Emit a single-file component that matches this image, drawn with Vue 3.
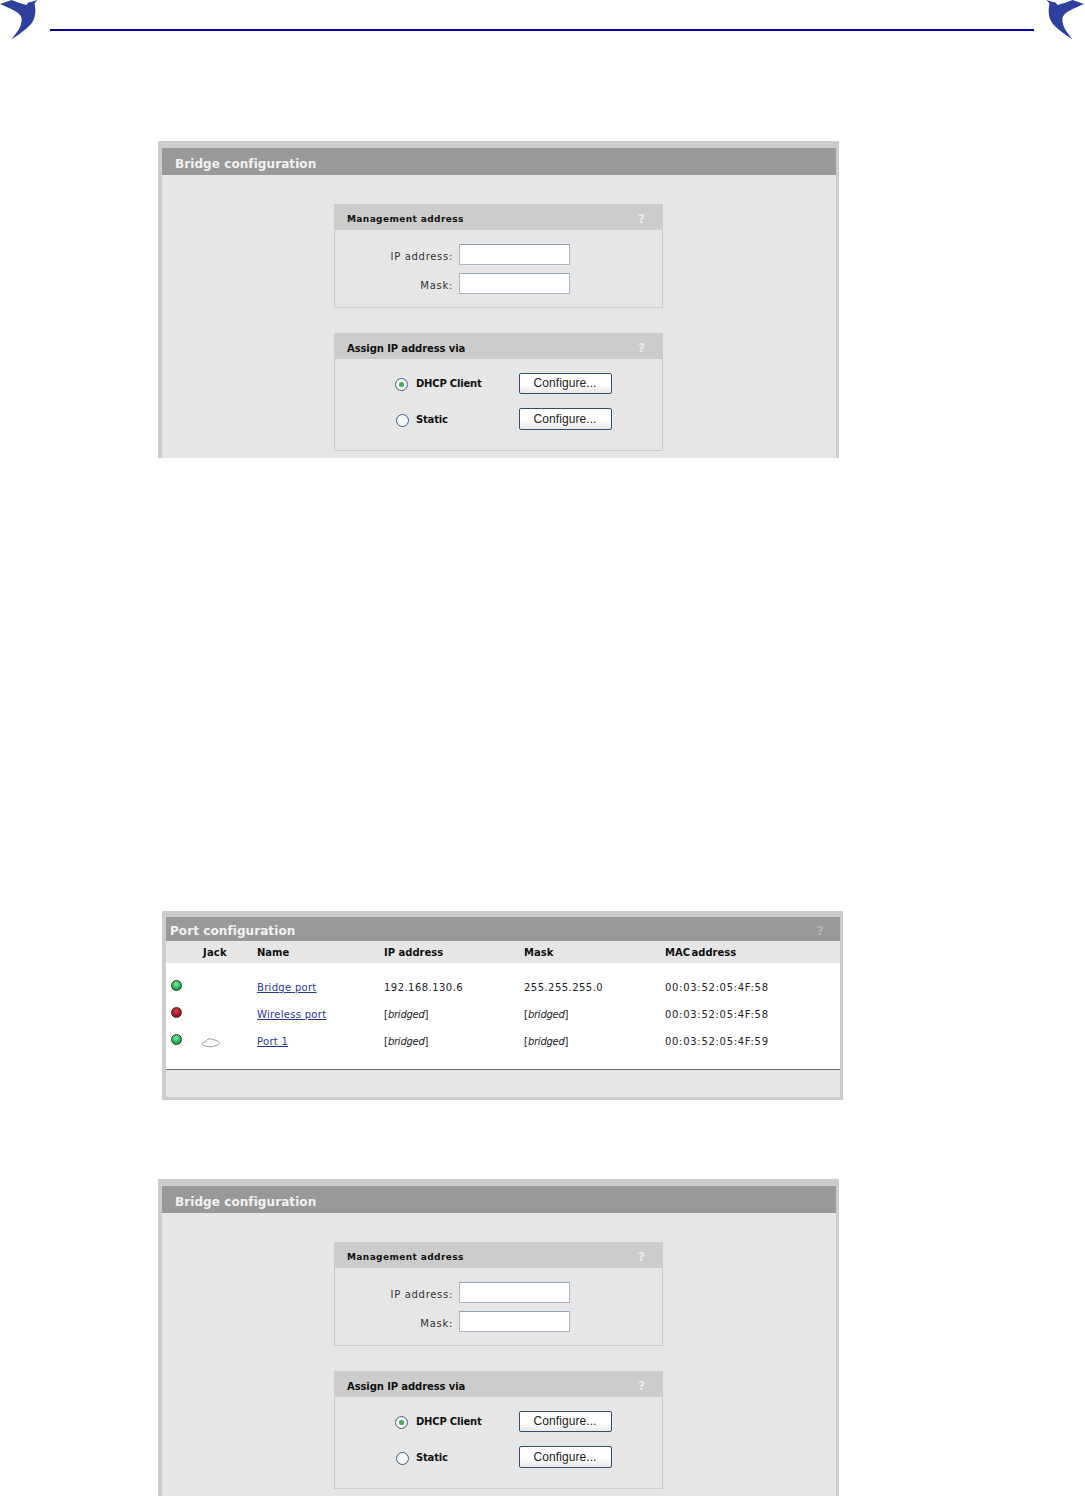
<script setup>
const birdPath = 'M0 4 L11.500 0 C17 2 22 4 26.500 5 C27.500 3 29 1.800 31 2 L37.500 0 L34.500 3.500 C35.500 8 36 13 34 19 C31 26 24 31 11.500 39.500 C16 33 20 29 21 24 C22 20 22 17 20 15 C17 11 8 7.500 0 4 Z'
const ports = [
  { name: 'Bridge port', ip: '192.168.130.6', mask: '255.255.255.0', mac: '00:03:52:05:4F:58', state: 'on', jack: false },
  { name: 'Wireless port', ip: null, mask: null, mac: '00:03:52:05:4F:58', state: 'off', jack: false },
  { name: 'Port 1', ip: null, mask: null, mac: '00:03:52:05:4F:59', state: 'on', jack: true }
]
const sections = [
  { id: 'first', cls: 'gap-top' },
  { id: 'second', cls: 'gap-last' }
]
</script>

<template>
  <div class="page">
    <header class="head">
      <svg class="bird" viewBox="0 0 38 40" width="38" height="40"><path :d="birdPath" fill="#2f3f9e" /></svg>
      <div class="rule"></div>
      <svg class="bird flip" viewBox="0 0 38 40" width="38" height="40"><path :d="birdPath" fill="#2f3f9e" /></svg>
    </header>

    <template v-for="(s, i) in sections" :key="s.id">
      <section class="panel bridge" :class="s.cls">
        <h2 class="title">Bridge configuration</h2>
        <div class="bridge-body">
          <div class="box mgmt">
            <div class="box-head">
              <span class="box-title tight">Management address</span>
              <span class="help">?</span>
            </div>
            <div class="fields">
              <label class="field"><span>IP address:</span><input type="text" class="inp" /></label>
              <label class="field"><span>Mask:</span><input type="text" class="inp" /></label>
            </div>
          </div>
          <div class="box assign">
            <div class="box-head">
              <span class="box-title wide">Assign IP address via</span>
              <span class="help">?</span>
            </div>
            <div class="options">
              <div class="option first">
                <span class="radio checked"><i></i></span>
                <span class="opt-label">DHCP Client</span>
                <button class="btn">Configure...</button>
              </div>
              <div class="option second">
                <span class="radio"></span>
                <span class="opt-label">Static</span>
                <button class="btn">Configure...</button>
              </div>
            </div>
          </div>
        </div>
      </section>

      <section v-if="i === 0" class="panel ports">
        <div class="title port-title">
          <span>Port configuration</span>
          <span class="help big">?</span>
        </div>
        <div class="grid grid-head">
          <span></span><span class="jack-head">Jack</span><span>Name</span><span>IP address</span><span>Mask</span><span class="mac-head">MAC address</span>
        </div>
        <div class="rows">
          <div v-for="p in ports" :key="p.name" class="grid row">
            <span class="light" :class="p.state"></span>
            <span class="jack">
              <svg v-if="p.jack" viewBox="0 0 20 11" width="20" height="11">
                <path d="M1 6.500 C3 5 5 4.500 6 3 C7 1.500 9 1.500 11 2.200 C13 3 16 3.500 18 5 C19.500 6.500 18.500 7.500 15 8.500 C12 9.800 8 10 6 9.500 C4 9 1.500 8 1 6.500 Z" fill="none" stroke="#999" stroke-width="1" />
              </svg>
            </span>
            <a class="link" href="#">{{ p.name }}</a>
            <span v-if="p.ip" class="num">{{ p.ip }}</span>
            <span v-else>[<em>bridged</em>]</span>
            <span v-if="p.mask" class="num">{{ p.mask }}</span>
            <span v-else>[<em>bridged</em>]</span>
            <span class="mac">{{ p.mac }}</span>
          </div>
        </div>
        <div class="port-foot"></div>
      </section>
    </template>
  </div>
</template>

<style scoped>
.page {
  width: 1085px;
  height: 1496px;
  overflow: hidden;
  background: #fff;
  font-family: "DejaVu Sans", Verdana, sans-serif;
  font-size: 10px;
  color: #111;
}
.head {
  display: flex;
  align-items: flex-start;
  gap: 12px;
  height: 41px;
  padding-right: 1px;
  box-sizing: border-box;
}
.bird { flex: none; display: block; }
.flip { transform: scaleX(-1); }
.rule {
  flex: 1;
  height: 2px;
  margin-top: 29px;
  background: #0000a0;
}
.panel {
  box-sizing: border-box;
  width: 681px;
  background: #e6e6e6;
  border: solid #ccc;
}
.bridge {
  height: 317px;
  margin-left: 158px;
  border-width: 7px 3px 0 4px;
}
.gap-top { margin-top: 100px; }
.gap-last { margin-top: 79px; }
.title {
  margin: 0;
  height: 27px;
  background: #999;
  color: #f2f2f2;
  font-size: 12px;
  letter-spacing: 0.08px;
  font-weight: bold;
  line-height: 33px;
  padding-left: 13px;
}
.bridge-body {
  padding: 29px 0 0 172px;
}
.box {
  box-sizing: border-box;
  width: 329px;
  border: 1px solid #ccc;
  border-top: 0;
}
.mgmt { height: 104px; }
.assign { height: 118px; margin-top: 25px; }
.box-head {
  display: flex;
  justify-content: space-between;
  align-items: center;
  height: 26px;
  margin: 0 -1px;
  padding: 4px 18px 0 13px;
  box-sizing: border-box;
  background: #ccc;
}
.box-title { font-weight: bold; color: #111; }
.tight { font-size: 9px; letter-spacing: 0.4px; }
.wide { font-size: 10px; letter-spacing: -0.1px; }
.help {
  color: #ededed;
  font-size: 12px;
  font-weight: bold;
}
.fields {
  display: flex;
  flex-direction: column;
  gap: 8px;
  padding-top: 14px;
  padding-right: 92px;
  align-items: flex-end;
}
.field {
  display: flex;
  align-items: center;
  gap: 6px;
  color: #333;
  letter-spacing: 0.7px;
}
.field span { padding-top: 4px; }
.inp {
  box-sizing: border-box;
  width: 111px;
  height: 21px;
  margin: 0;
  padding: 0;
  background: #fff;
  border: 1px solid #a9b6c6;
  border-top-color: #8ea3ba;
  border-radius: 0;
}
.options {
  display: flex;
  flex-direction: column;
  gap: 14px;
  padding: 14px 0 0 61px;
}
.option {
  display: flex;
  align-items: center;
}
.first { height: 21px; }
.second { height: 22px; }
.radio {
  flex: none;
  box-sizing: border-box;
  width: 13px;
  height: 13px;
  margin-top: 2px;
  border: 1px solid #3d5f80;
  border-radius: 50%;
  background: #f4f6f8;
  display: flex;
  align-items: center;
  justify-content: center;
}
.first .radio { margin-left: -1px; margin-right: 1px; }
.radio i {
  width: 5px;
  height: 5px;
  border-radius: 50%;
  background: #3fae55;
}
.opt-label {
  width: 103px;
  margin-left: 7px;
  font-weight: bold;
  font-size: 10px;
  letter-spacing: -0.2px;
  color: #111;
}
.btn {
  box-sizing: border-box;
  width: 93px;
  height: 100%;
  margin: 0;
  padding: 0 1px 2px 0;
  background: linear-gradient(#fff, #fff 55%, #e8e8e8);
  border: 1px solid #33506e;
  border-radius: 2px;
  font-family: "Liberation Sans", Arial, sans-serif;
  font-size: 12px;
  letter-spacing: 0.08px;
  color: #222;
}
.second .btn { padding-bottom: 0; }
.ports {
  height: 189px;
  margin-top: 453px;
  margin-left: 162px;
  width: 681px;
  border-width: 6px 3px 3px 4px;
}
.port-title {
  display: flex;
  justify-content: space-between;
  align-items: center;
  line-height: 24px;
  padding: 4px 16px 0 4px;
  box-sizing: border-box;
  height: 24px;
}
.big { font-size: 13px; color: #b5b5b5; }
.grid {
  display: grid;
  grid-template-columns: 36px 55px 127px 140px 141px 1fr;
  align-items: center;
}
.grid-head {
  height: 22px;
  font-weight: bold;
  background: #e6e6e6;
  color: #111;
}
.jack-head { padding-left: 1px; letter-spacing: 0.2px; }
.mac-head { word-spacing: -2px; }
.rows {
  height: 106px;
  padding-top: 11px;
  box-sizing: border-box;
  background: #fff;
}
.row {
  height: 27px;
  color: #222;
}
.num { letter-spacing: 0.46px; }
.mac { letter-spacing: 0.7px; }
.link { color: #26388f; text-decoration: underline; letter-spacing: 0.3px; justify-self: start; }
em { font-style: italic; letter-spacing: -0.25px; }
.light {
  width: 11px;
  height: 11px;
  margin: -4px 0 0 5px;
  border-radius: 50%;
  border: 1px solid #2a3a2a;
  box-sizing: border-box;
}
.on { background: radial-gradient(circle at 45% 35%, #7df09a, #18a848 65%, #0c7a33); }
.off { background: radial-gradient(circle at 45% 35%, #d8404a, #a80f1c 60%, #6e0a12); }
.jack { display: flex; align-items: center; height: 11px; margin-left: -1px; }
.jack svg { display: block; margin-top: 2px; }
.port-foot {
  height: 28px;
  box-sizing: border-box;
  border-top: 1px solid #666;
  background: #e6e6e6;
}
</style>
